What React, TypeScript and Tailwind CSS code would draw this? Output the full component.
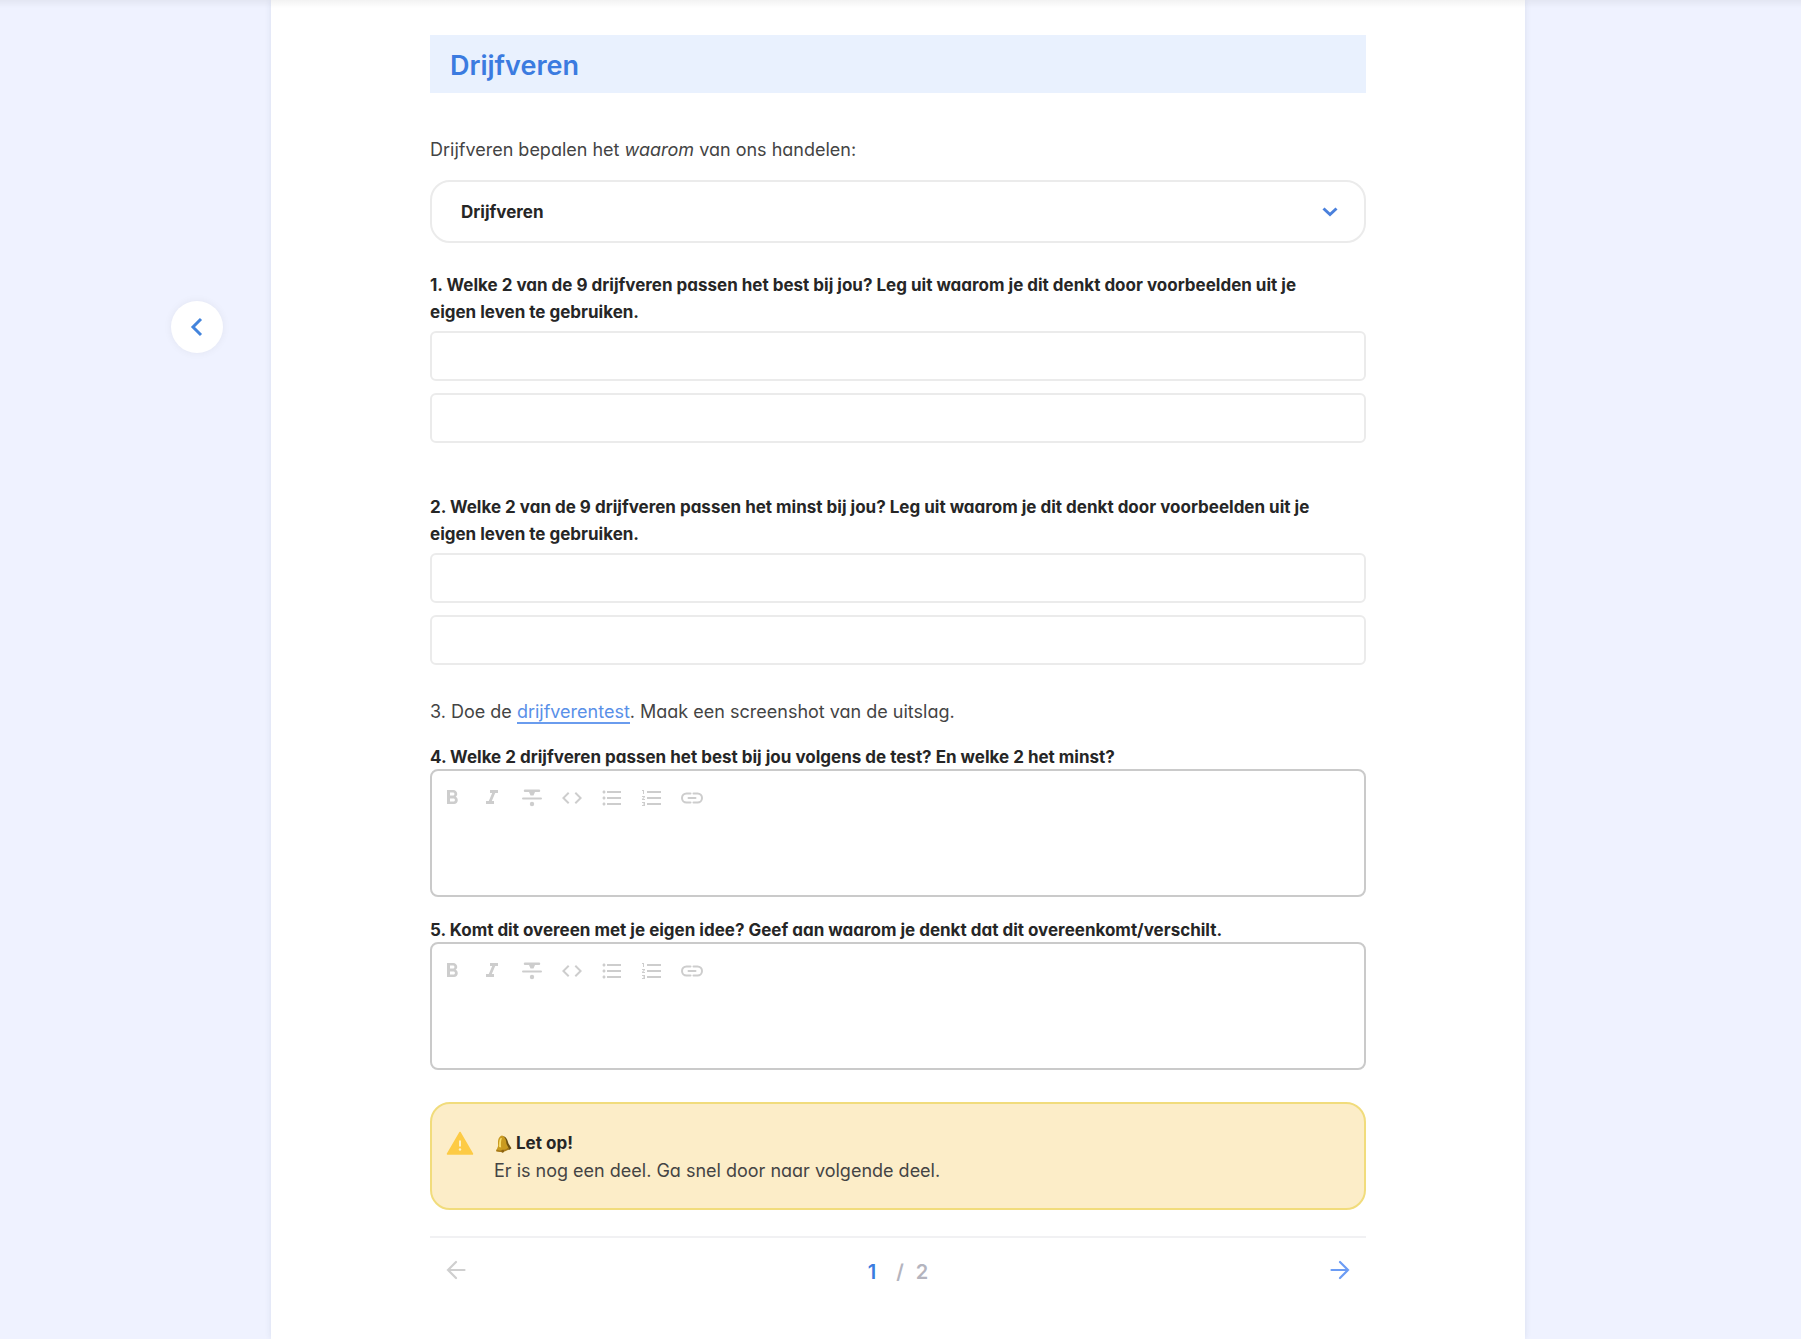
import React, { useState } from 'react';
import { MdCode, MdFormatBold, MdFormatItalic, MdFormatListBulleted, MdFormatListNumbered } from 'react-icons/md';

const StrikeIcon = () => (
    <svg viewBox="0 0 24 24" className="w-6 h-6" fill="currentColor" aria-hidden="true">
        <path d="M5 3.500h14a1.200 1.200 0 0 1 0 2.500h-4l-1.500 3.500h-3L9 6H5a1.200 1.200 0 0 1 0-2.500z" />
        <rect x="2" y="11.500" width="20" height="2" rx="1" />
        <circle cx="12" cy="18" r="2.200" />
    </svg>
);

const LinkIcon = () => (
    <svg viewBox="0 0 24 24" className="w-6 h-6" fill="none" stroke="currentColor" strokeWidth="2" strokeLinecap="round" aria-hidden="true">
        <path d="M10.500 7.500H6.500a4.500 4.500 0 0 0 0 9h4M13.500 7.500h4a4.500 4.500 0 0 1 0 9h-4M8.500 12h7" />
    </svg>
);

const BellIcon = () => (
    <svg viewBox="0 0 18 18" className="w-[18px] h-[18px]" aria-hidden="true">
        <g transform="rotate(-6 9 9)">
            <path d="M10 1c3 1 4 4.500 4.500 8l2.500 5-2 1.500-5-1z" fill="#6d5212" />
            <path d="M7.500.8c1-.8 2.300-.4 2.600.6 2 1.500 2.400 4.600 2.400 8l1.500 4c-2 2.300-9 2.900-12 .9l2-4c.2-4 .2-7.500 3.500-9.500z" fill="#c99a20" />
            <path d="M7 3c-1.600 2-1.900 5.500-2.200 8.500l2 .7c0-3 .2-6 1.700-9.200z" fill="#f9df6c" />
            <path d="M1.800 13.800c3 1.800 9.500 1.500 12.200-.8l.6 1.500c-3 2.700-10.300 3-13.300 1z" fill="#a87a15" />
            <circle cx="8" cy="16.200" r="1.400" fill="#8d6411" />
        </g>
    </svg>
);

const WarningIcon = () => (
    <svg viewBox="0 0 28 26" className="w-7 h-[26px] shrink-0" aria-hidden="true">
        <path d="M14 2.500 26.500 24h-25z" fill="#fdcb45" stroke="#fdcb45" strokeWidth="1.500" strokeLinejoin="round" />
        <path d="M14 10.500v6" stroke="#fdf0c8" strokeWidth="2" />
        <circle cx="14" cy="19.500" r="1.200" fill="#fdf0c8" />
    </svg>
);

const tools = [
    { label: 'Vet', icon: <MdFormatBold className="w-6 h-6" /> },
    { label: 'Cursief', icon: <MdFormatItalic className="w-6 h-6" /> },
    { label: 'Doorhalen', icon: <StrikeIcon /> },
    { label: 'Code', icon: <MdCode className="w-6 h-6" /> },
    { label: 'Lijst', icon: <MdFormatListBulleted className="w-6 h-6" /> },
    { label: 'Genummerde lijst', icon: <MdFormatListNumbered className="w-6 h-6" /> },
    { label: 'Link', icon: <LinkIcon /> },
];

const ShortQuestion: React.FC<{ id: string; children: React.ReactNode }> = ({ id, children }) => (
    <section>
        <p id={id} className="text-[17px] font-bold text-[#262626]">{children}</p>
        <div className="mt-[5px] flex flex-col gap-3">
            <input type="text" aria-labelledby={id} className="h-[50px] w-full rounded-md border-2 border-[#ebebeb] bg-white px-4 outline-none focus:border-blue-300" />
            <input type="text" aria-labelledby={id} className="h-[50px] w-full rounded-md border-2 border-[#ebebeb] bg-white px-4 outline-none focus:border-blue-300" />
        </div>
    </section>
);

const EditorQuestion: React.FC<{ id: string; children: React.ReactNode }> = ({ id, children }) => (
    <section>
        <label htmlFor={id} className="block text-[17px] leading-6 font-bold text-[#262626]">{children}</label>
        <div className="rounded-lg border-2 border-[#cacaca] bg-white px-2 pt-[15px]">
            <div className="flex gap-4 text-[#cdcdcd]">
                {tools.map((tool) => (
                    <button key={tool.label} type="button" aria-label={tool.label}>{tool.icon}</button>
                ))}
            </div>
            <textarea id={id} className="mt-2 block h-[77px] w-full resize-none px-2 outline-none" />
        </div>
    </section>
);

export default function App() {
    const [open, setOpen] = useState(false);

    return (
        <div className="relative flex min-h-screen bg-[#eff2ff] pr-[5px] font-['Inter','Open_Sans',sans-serif] text-[18px] leading-[27px] text-[#444] [font-feature-settings:'cv11']">
            {/* Shadow of the top bar */}
            <div className="pointer-events-none absolute inset-x-0 top-0 z-10 h-2 bg-gradient-to-b from-black/5 to-transparent" />

            <aside className="flex flex-1 items-start justify-end">
                <button type="button" aria-label="Terug" className="mt-[301px] mr-12 flex h-[52px] w-[52px] items-center justify-center rounded-full bg-white text-[#4384dc] shadow-[0_0_8px_rgba(0,0,0,0.06)]">
                    <svg viewBox="0 0 24 24" className="w-6 h-6" fill="none" stroke="currentColor" strokeWidth="3" aria-hidden="true">
                        <path d="m16 4-8 8 8 8" />
                    </svg>
                </button>
            </aside>

            <main className="w-full max-w-[1254px] bg-white px-[159px] pt-[35px] pb-10 shadow-[0_0_6px_rgba(60,80,120,0.12)]">
                <h1 className="bg-[#e9f1fe] px-5 pt-4 pb-3 text-[27px] leading-[30px] font-semibold text-[#3b7be0]">Drijfveren</h1>

                <p className="mt-[43px]">Drijfveren bepalen het <em>waarom</em> van ons handelen:</p>

                <button type="button" aria-expanded={open} onClick={() => setOpen(!open)} className="mt-[17px] flex h-[63px] w-full items-center justify-between rounded-[20px] border-2 border-[#ebebeb] pr-[26px] pl-[29px] pt-px text-[17px] font-bold text-[#262626]">
                    Drijfveren
                    <svg viewBox="0 0 16 16" className="w-4 h-4" fill="none" stroke="#4a80dc" strokeWidth="3" aria-hidden="true">
                        <path d="m1.500 4.500 6.500 6 6.500-6" />
                    </svg>
                </button>

                <div className="mt-[29px]">
                    <ShortQuestion id="vraag-1">
                        1. Welke 2 van de 9 drijfveren passen het best bij jou? Leg uit waarom je dit denkt door voorbeelden uit je<br />eigen leven te gebruiken.
                    </ShortQuestion>
                </div>
                <div className="mt-[51px]">
                    <ShortQuestion id="vraag-2">
                        2. Welke 2 van de 9 drijfveren passen het minst bij jou? Leg uit waarom je dit denkt door voorbeelden uit je<br />eigen leven te gebruiken.
                    </ShortQuestion>
                </div>

                <p className="mt-[33px]">
                    3. Doe de <a href="#drijfverentest" className="border-b-2 border-[#6a9cee] text-[#5990e8]">drijfverentest</a>. Maak een screenshot van de uitslag.
                </p>

                <div className="mt-5 flex flex-col gap-[21px]">
                    <EditorQuestion id="vraag-4">4. Welke 2 drijfveren passen het best bij jou volgens de test? En welke 2 het minst?</EditorQuestion>
                    <EditorQuestion id="vraag-5">5. Komt dit overeen met je eigen idee? Geef aan waarom je denkt dat dit overeenkomt/verschilt.</EditorQuestion>
                </div>

                <div className="mt-8 flex gap-5 rounded-[20px] border-2 border-[#f1dc7c] bg-[#fcedc8] px-3.5 pt-[26px] pb-6">
                    <WarningIcon />
                    <div>
                        <p className="flex items-center gap-1 text-[17px] font-bold text-[#262626]"><BellIcon />Let op!</p>
                        <p>Er is nog een deel. Ga snel door naar volgende deel.</p>
                    </div>
                </div>

                <nav aria-label="Pagina's" className="mt-[26px] flex items-center justify-between border-t-2 border-[#f1f1f3] px-3.5 pt-[18px]">
                    <button type="button" aria-label="Vorige" className="text-[#cfcfcf]">
                        <svg viewBox="0 0 24 24" className="w-6 h-6" fill="none" stroke="currentColor" strokeWidth="2.200" strokeLinecap="round" aria-hidden="true">
                            <path d="M20.500 12H4M12 4l-8 8 8 8" />
                        </svg>
                    </button>
                    <div className="flex gap-3 pt-1 text-[20px] leading-6 font-semibold text-[#b4b4be]">
                        <span className="mr-2 text-[#3b7be0]">1</span>
                        <span>/</span>
                        <span>2</span>
                    </div>
                    <button type="button" aria-label="Volgende" className="text-[#6c9cf4]">
                        <svg viewBox="0 0 24 24" className="w-6 h-6" fill="none" stroke="currentColor" strokeWidth="2.200" strokeLinecap="round" aria-hidden="true">
                            <path d="M3.500 12H20M12 4l8 8-8 8" />
                        </svg>
                    </button>
                </nav>
            </main>

            <div className="flex-1" />
        </div>
    );
}
